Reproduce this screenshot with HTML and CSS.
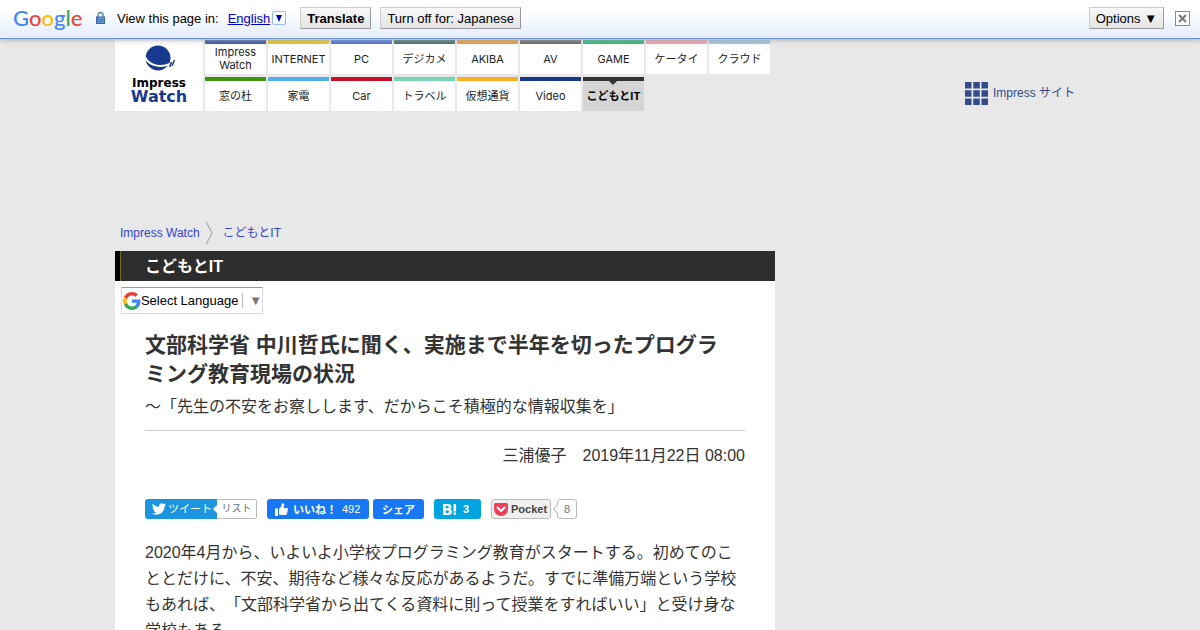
FILE: index.html
```html
<!DOCTYPE html>
<html lang="ja">
<head>
    <meta charset="UTF-8">
    <meta name="viewport" content="width=device-width, initial-scale=1.0">
    <title>文部科学省 中川哲氏に聞く - こどもとIT</title>
    <link rel="stylesheet" href="styles.css">
</head>
<body>
    <div class="translate-bar" lang="en">
        <a class="google-logo" href="#"><span class="g-blue">G</span><span class="g-red">o</span><span class="g-yellow">o</span><span class="g-blue">g</span><span class="g-green">l</span><span class="g-red">e</span></a>
        <svg class="lock" width="9" height="12" viewBox="0 0 9 12">
            <path d="M2 6V3a2.5 2.5 0 0 1 5 0v3" fill="none" stroke="#4b7db8" stroke-width="1.3"/>
            <rect x="0.5" y="5" width="8" height="6.5" fill="#6f9fd4" stroke="#3567a5"/>
            <path d="M1 7.3h7M1 9.3h7" stroke="#3567a5" stroke-width="0.8"/>
        </svg>
        <span class="view-in">View this page in:</span>
        <a class="lang-link" href="#">English</a>
        <a class="lang-arrow" href="#" aria-label="Change language"><svg width="6" height="7" viewBox="0 0 6 7"><path d="M0 0h6L3 7z" fill="#0000b4"/></svg></a>
        <button type="button" class="bar-button translate">Translate</button>
        <button type="button" class="bar-button">Turn off for: Japanese</button>
        <button type="button" class="bar-button options">Options ▼</button>
        <button type="button" class="close" aria-label="Close"><svg width="9" height="9" viewBox="0 0 9 9"><path d="M1 1l7 7M8 1L1 8" stroke="#777" stroke-width="2"/></svg></button>
    </div>

    <div class="page">
        <header class="site-header">
            <a class="site-logo" href="#">
                <svg width="34" height="27" viewBox="0 0 34 27">
                    <circle cx="16" cy="13" r="12.500" fill="#17398f"/>
                    <path d="M2 9C4 19 16 24 28 19" fill="none" stroke="#fff" stroke-width="2"/>
                    <path d="M27.500 22l2-5M30 21l2.500-6" stroke="#17398f" stroke-width="1.500"/>
                </svg>
                <span class="logo-impress">Impress</span>
                <span class="logo-watch">Watch</span>
            </a>
            <nav class="site-nav">
                <a class="tile watch" href="#">Impress<br>Watch</a>
                <a class="tile internet" href="#">INTERNET</a>
                <a class="tile pc" href="#">PC</a>
                <a class="tile dc" href="#">デジカメ</a>
                <a class="tile akiba" href="#">AKIBA</a>
                <a class="tile av" href="#">AV</a>
                <a class="tile game" href="#">GAME</a>
                <a class="tile ktai" href="#">ケータイ</a>
                <a class="tile cloud" href="#">クラウド</a>
                <a class="tile forest" href="#">窓の杜</a>
                <a class="tile kaden" href="#">家電</a>
                <a class="tile car" href="#">Car</a>
                <a class="tile travel" href="#">トラベル</a>
                <a class="tile crypto" href="#">仮想通貨</a>
                <a class="tile video" href="#">Video</a>
                <a class="tile kodomo current" href="#">こどもとIT</a>
            </nav>
            <a class="all-sites" href="#">
                <svg width="23" height="23" viewBox="0 0 23 23" fill="#334a8c">
                    <path d="M0 0h6.500v6.500H0zM8.300 0h6.500v6.500h-6.500zM16.500 0H23v6.500h-6.500zM0 8.300h6.500v6.500H0zM8.300 8.300h6.500v6.500h-6.500zM16.500 8.300H23v6.500h-6.500zM0 16.500h6.500V23H0zM8.300 16.500h6.500V23h-6.500zM16.500 16.500H23V23h-6.500z"/>
                </svg>
                Impress サイト
            </a>
        </header>

        <nav class="breadcrumb">
            <a href="#">Impress Watch</a>
            <svg width="8" height="24" viewBox="0 0 8 24"><path d="M1 0.500L7 12L1 23.500" fill="none" stroke="#999"/></svg>
            <a href="#">こどもとIT</a>
        </nav>

        <main class="main">
            <div class="section-title">こどもとIT</div>

            <div class="language-box" lang="en">
                <svg width="18" height="18" viewBox="0 0 48 48">
                    <path fill="#EA4335" d="M24 9.500c3.540 0 6.710 1.220 9.210 3.600l6.850-6.850C35.900 2.380 30.470 0 24 0 14.620 0 6.510 5.380 2.560 13.220l7.980 6.190C12.430 13.720 17.740 9.500 24 9.500z"/>
                    <path fill="#4285F4" d="M46.980 24.550c0-1.570-.15-3.090-.38-4.550H24v9.020h12.940c-.58 2.960-2.260 5.480-4.780 7.180l7.730 6c4.510-4.180 7.090-10.360 7.090-17.650z"/>
                    <path fill="#FBBC05" d="M10.530 28.590A14.500 14.500 0 0 1 10.530 19.410l-7.980-6.190a24 24 0 0 0 0 21.560z"/>
                    <path fill="#34A853" d="M24 48c6.480 0 11.930-2.130 15.890-5.810l-7.730-6c-2.150 1.450-4.920 2.300-8.160 2.300-6.260 0-11.570-4.220-13.470-9.910l-7.980 6.190C6.510 42.620 14.620 48 24 48z"/>
                </svg>
                <select aria-label="Select Language">
                    <option>Select Language</option>
                    <option>English</option>
                </select>
                <span class="language-arrow">▼</span>
            </div>

            <article class="article">
                <h1>文部科学省 中川哲氏に聞く、実施まで半年を切ったプログラ<br>ミング教育現場の状況</h1>
                <p class="subtitle">～「先生の不安をお察しします、だからこそ積極的な情報収集を」</p>
                <p class="byline">三浦優子　2019年11月22日 08:00</p>

                <div class="social">
                    <a class="share tweet" href="#">
                        <svg width="14" height="14" viewBox="0 0 24 24" fill="#fff"><path d="M24 4.600a10 10 0 0 1-2.800.8 5 5 0 0 0 2.200-2.700c-1 .5-2 1-3.100 1.200a4.900 4.900 0 0 0-8.400 4.500C7.700 8.100 4.100 6.100 1.700 3.100a4.900 4.900 0 0 0 1.500 6.600c-.8 0-1.600-.2-2.200-.6v.1a4.900 4.900 0 0 0 3.900 4.800 5 5 0 0 1-2.200.1 4.900 4.900 0 0 0 4.600 3.400A9.900 9.900 0 0 1 0 19.500 14 14 0 0 0 7.500 21.700c9.100 0 14-7.500 14-14v-.6A10 10 0 0 0 24 4.600z"/></svg>
                        ツイート
                    </a>
                    <a class="tweet-list" href="#">リスト</a>
                    <button type="button" class="share like">
                        <svg width="13" height="13" viewBox="0 0 13 13" fill="#fff"><path d="M0 5.500h3V13H0zM4 6l2.500-3L7 0c2 0 2.500 1.500 2 3l-.5 2H12c1 0 1.200 1.200.5 1.800.6.500.4 1.500-.3 1.800.4.600.1 1.400-.5 1.700.2.700-.2 1.500-1 1.700H6L4 11.500z"/></svg>
                        <b>いいね！</b><span>492</span>
                    </button>
                    <button type="button" class="share fb-share">シェア</button>
                    <a class="share hatena" href="#">
                        <svg width="14" height="11" viewBox="0 0 14 11"><path fill="#fff" fill-rule="evenodd" d="M0 0h4.500C7.500 0 8.500 1.200 8.500 2.800 8.500 4 7.800 4.800 6.600 5.100 8 5.300 9 6.200 9 7.700 9 9.800 7.500 11 4.800 11H0zM2.700 2v2.300h1.200C5.300 4.300 5.800 4 5.800 3.200 5.800 2.300 5.200 2 4 2zM2.700 6.400v2.500h1.500C5.500 8.900 6.100 8.500 6.100 7.700 6.100 6.700 5.500 6.400 4.300 6.400zM10.500 0h2.600v7.500h-2.600z"/><circle cx="11.800" cy="9.600" r="1.400" fill="#fff"/></svg>
                        3
                    </a>
                    <a class="pocket" href="#">
                        <svg width="14" height="13" viewBox="0 0 14 13"><path d="M1.500 0h11A1.500 1.500 0 0 1 14 1.500V6a7 7 0 0 1-14 0V1.500A1.500 1.500 0 0 1 1.500 0z" fill="#ee4056"/><path d="M3.500 4.500L7 8l3.500-3.500" fill="none" stroke="#fff" stroke-width="2" stroke-linecap="round" stroke-linejoin="round"/></svg>
                        Pocket
                    </a>
                    <span class="pocket-count">8</span>
                </div>

                <p class="text">2020年4月から、いよいよ小学校プログラミング教育がスタートする。初めてのこととだけに、不安、期待など様々な反応があるようだ。すでに準備万端という学校もあれば、「文部科学省から出てくる資料に則って授業をすればいい」と受け身な学校もある。</p>
            </article>
        </main>
    </div>
</body>
</html>
```

FILE: styles.css
```css
* {
    box-sizing: border-box;
}
body {
    margin: 0;
    background: #e8e8e8;
    color: #333;
    font-family: "Liberation Sans", "Noto Sans CJK JP", sans-serif;
    font-size: 16px;
    text-spacing-trim: space-all;
}
a {
    color: #3344cc;
    text-decoration: none;
}
button {
    font-family: inherit;
    cursor: pointer;
}

/* translate bar */
.translate-bar {
    position: relative;
    z-index: 1;
    display: flex;
    align-items: center;
    height: 39px;
    padding: 0 10px 2px 13px;
    background: linear-gradient(#fff 30%, #e2ecfb);
    border-bottom: 1px solid #6b90da;
    box-shadow: 0 1px 5px #aaa;
    color: #000;
    font-size: 13px;
}
.google-logo {
    width: 83px;
    font-family: Lato, sans-serif;
    font-size: 22px;
    font-weight: 500;
    line-height: 24px;
}
.g-blue { color: #4285f4; }
.g-red { color: #ea4335; }
.g-yellow { color: #fbbc05; }
.g-green { color: #34a853; }
.lock {
    margin-right: 12px;
}
.view-in {
    margin-right: 9px;
}
.lang-link {
    color: #0000cc;
    text-decoration: underline;
}
.lang-arrow {
    display: flex;
    align-items: center;
    justify-content: center;
    width: 14px;
    height: 14px;
    margin: 0 14px 0 2px;
    border: 1px solid #9ab8e8;
    border-radius: 2px;
}
.bar-button {
    height: 22px;
    margin-right: 9px;
    padding: 0 6px;
    background: linear-gradient(#f8f8f8, #e4e4e4);
    border: 1px solid #ccc;
    border-right-color: #999;
    border-bottom-color: #999;
    color: #000;
    font-size: 13px;
}
.translate {
    font-weight: bold;
}
.options {
    margin-left: auto;
    margin-right: 11px;
}
.close {
    display: flex;
    align-items: center;
    justify-content: center;
    width: 15px;
    height: 15px;
    padding: 0;
    background: #fff;
    border: 1px solid #888;
}

/* header */
.page {
    max-width: 970px;
    margin: 0 auto;
}
.site-header {
    display: flex;
    height: 182px;
}
.site-logo {
    display: flex;
    flex-direction: column;
    align-items: center;
    width: 88px;
    height: 72px;
    margin-right: 2px;
    padding-top: 6px;
    background: #fff;
    font-family: "DejaVu Sans", sans-serif;
    font-weight: bold;
}
.logo-impress {
    margin-top: 4px;
    color: #000;
    font-size: 12px;
    line-height: 14px;
}
.logo-watch {
    color: #17398f;
    font-size: 16px;
    line-height: 14px;
}
.site-nav {
    display: grid;
    grid-template-columns: repeat(9, 61px);
    grid-auto-rows: 34px;
    align-content: start;
    gap: 3px 2px;
    padding-top: 1px;
}
.tile {
    position: relative;
    display: flex;
    align-items: center;
    justify-content: center;
    background: #fff;
    border-top: 4px solid #333;
    color: #222;
    font-family: Inter, "Noto Sans CJK JP", sans-serif;
    font-size: 11px;
    line-height: 13px;
    text-align: center;
    white-space: nowrap;
}
.watch { border-color: #3b559f; }
.internet { border-color: #e0c62c; }
.pc { border-color: #4c72e0; }
.dc { border-color: #44706e; }
.akiba { border-color: #e2a03c; }
.av { border-color: #6c6c6c; }
.game { border-color: #2fb874; }
.ktai { border-color: #e5a3ae; }
.cloud { border-color: #9fc5df; }
.forest { border-color: #3c960f; }
.kaden { border-color: #50aeee; }
.car { border-color: #cc0d29; }
.travel { border-color: #75d3b0; }
.crypto { border-color: #f5b01c; }
.video { border-color: #15388a; }
.current {
    background: #d4d4d4;
    border-color: #333;
    color: #000;
    font-weight: bold;
}
.current::before {
    content: "";
    position: absolute;
    top: 0;
    left: 26px;
    border: 4px solid transparent;
    border-top-color: #333;
    border-bottom: 0;
}
.all-sites {
    display: flex;
    align-items: center;
    align-self: flex-start;
    gap: 5px;
    margin: 43px 10px 0 auto;
    color: #334a8c;
    font-size: 12px;
    line-height: 23px;
}
.breadcrumb {
    display: flex;
    align-items: center;
    height: 24px;
    margin-bottom: 6px;
    padding-left: 5px;
    font-size: 12px;
    line-height: 24px;
}
.breadcrumb svg {
    margin: 0 10px 0 5px;
}

/* article */
.main {
    max-width: 660px;
    min-height: 379px;
    background: #fff;
}
.section-title {
    height: 30px;
    padding-left: 24px;
    background: #2d2d2d;
    border-left: 5px solid #000;
    box-shadow: inset 1px 0 #6d6d20;
    color: #fff;
    font-weight: bold;
    line-height: 32px;
    text-indent: 1px;
}
.language-box {
    display: flex;
    align-items: center;
    width: 142px;
    height: 27px;
    margin: 6px 0 0 6px;
    padding-left: 1px;
    border: 1px solid #d5d5d5;
    border-top-color: #9b9b9b;
}
.language-box select {
    width: 102px;
    padding: 0;
    appearance: none;
    background: none;
    border: 0;
    color: #000;
    font-family: inherit;
    font-size: 13px;
}
.language-arrow {
    padding-left: 6px;
    border-left: 1px solid #bbb;
    color: #767676;
    font-size: 13px;
    line-height: 15px;
}
.article {
    padding: 16px 30px 0;
}
h1 {
    margin: 0;
    font-size: 21px;
    line-height: 29px;
}
.subtitle {
    margin: 0;
    padding: 6px 0 11px;
    border-bottom: 1px solid #ccc;
    line-height: 25px;
}
.byline {
    margin: 12px 0 31px;
    line-height: 25px;
    text-align: right;
}
.social {
    display: flex;
    height: 20px;
    font-size: 11px;
    line-height: 20px;
}
.share {
    display: flex;
    align-items: center;
    border: 0;
    border-radius: 3px;
    color: #fff;
    font-size: 11px;
}
.tweet {
    gap: 2px;
    width: 72px;
    padding-left: 7px;
    background: #1b95e0;
    border-radius: 3px 0 0 3px;
    white-space: nowrap;
}
.tweet-list,
.pocket-count {
    position: relative;
    border: 1px solid #bbb;
    border-radius: 2px;
    line-height: 18px;
    text-align: center;
}
.tweet-list {
    width: 40px;
    margin-right: 10px;
    border-left: 0;
    color: #5b7085;
    font-size: 10px;
}
.tweet-list::before {
    content: "";
    position: absolute;
    top: 5px;
    left: -4px;
    border: 4px solid transparent;
    border-right-color: #fff;
    border-left: 0;
}
.like {
    gap: 5px;
    width: 102px;
    margin-right: 4px;
    padding: 0 0 0 8px;
    background: #1877f2;
    white-space: nowrap;
}
.fb-share {
    justify-content: center;
    width: 51px;
    margin-right: 10px;
    padding: 0;
    background: #1877f2;
    font-weight: bold;
}
.hatena {
    gap: 6px;
    width: 47px;
    margin-right: 10px;
    padding-left: 9px;
    background: #00a4de;
    font-weight: bold;
}
.pocket {
    display: flex;
    align-items: center;
    gap: 3px;
    width: 60px;
    margin-right: 6px;
    padding-left: 2px;
    background: #f0f0f0;
    border: 1px solid #bbb;
    border-radius: 3px;
    color: #444;
    font-weight: bold;
}
.pocket-count {
    width: 20px;
    border-radius: 3px;
    color: #777;
}
.pocket-count::before {
    content: "";
    position: absolute;
    top: 6px;
    left: -4px;
    width: 5px;
    height: 5px;
    background: #fff;
    border: solid #bbb;
    border-width: 0 0 1px 1px;
    transform: rotate(45deg);
}
.text {
    margin: 21px 0 0;
    line-height: 26px;
}
```
